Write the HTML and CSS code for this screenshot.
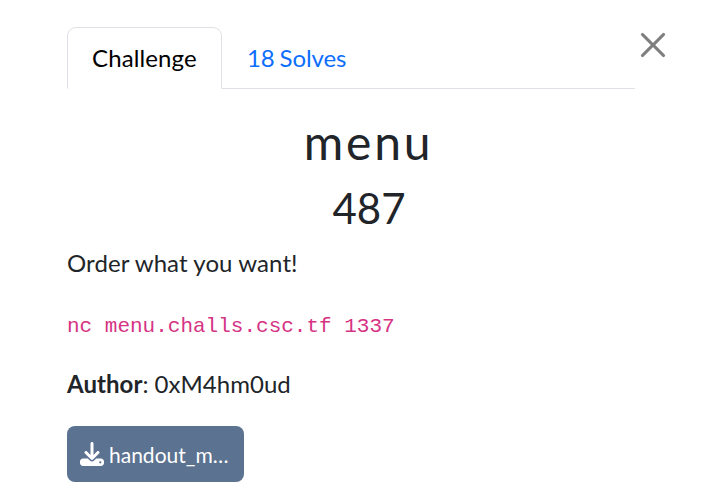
FILE: index.html
```html
<!DOCTYPE html>
<html lang="en">
<head>
<meta charset="utf-8">
<title>menu</title>
<link rel="stylesheet" href="styles.css">
</head>
<body>
<main class="modal">
  <header class="head">
    <nav class="tabs">
      <a class="tab active">Challenge</a>
      <a class="tab solves">18 Solves</a>
    </nav>
    <button class="close" aria-label="Close"><svg viewBox="0 0 16 16"><path d="M.293.293a1 1 0 0 1 1.414 0L8 6.586 14.293.293a1 1 0 1 1 1.414 1.414L9.414 8l6.293 6.293a1 1 0 0 1-1.414 1.414L8 9.414l-6.293 6.293a1 1 0 0 1-1.414-1.414L6.586 8 .293 1.707a1 1 0 0 1 0-1.414z"/></svg></button>
  </header>
  <section class="body">
    <h2 class="name">menu</h2>
    <h3 class="value">487</h3>
    <p class="desc">Order what you want!</p>
    <p class="cmd"><code>nc menu.challs.csc.tf 1337</code></p>
    <p class="author"><strong>Author</strong>: 0xM4hm0ud</p>
    <a class="file"><svg viewBox="0 0 512 512"><path d="M288 32c0-17.700-14.300-32-32-32s-32 14.300-32 32v242.700l-73.400-73.400c-12.500-12.500-32.800-12.500-45.300 0s-12.500 32.800 0 45.300l128 128c12.500 12.500 32.800 12.500 45.300 0l128-128c12.500-12.500 12.500-32.800 0-45.300s-32.800-12.500-45.300 0L288 274.700V32zM64 352c-35.300 0-64 28.700-64 64v32c0 35.300 28.700 64 64 64h384c35.300 0 64-28.700 64-64v-32c0-35.300-28.700-64-64-64H346.500l-45.300 45.300c-25 25-65.500 25-90.500 0L165.500 352H64zm368 56a24 24 0 1 1 0 48 24 24 0 1 1 0-48z"/></svg><span>handout_m…</span></a>
  </section>
</main>
</body>
</html>
```
FILE: styles.css
```css
* { box-sizing: border-box; }
body { margin: 0; background: #fff; color: #212529; font: 24px/36px Lato, sans-serif; }
h2, h3, p { margin: 0; font-weight: 400; }
.modal { padding: 27px 0 0 67px; }
.head { display: flex; align-items: flex-start; }
.tabs { display: flex; width: 568px; height: 62px; border-bottom: 1px solid #dee2e6; }
.tab { height: 62px; padding: 12px 24px; border: 1px solid transparent; border-radius: 9px 9px 0 0; color: #0d6efd; }
.tab.active { width: 155px; color: #000; background: #fff; border-color: #dee2e6 #dee2e6 #fff; letter-spacing: .12px; }
.tab.solves { word-spacing: -1.2px; letter-spacing: -.08px; }
.close { margin: 6px 0 0 6px; padding: 0; border: 0; background: none; width: 24px; height: 24px; opacity: .5; }
.close svg { display: block; width: 24px; height: 24px; stroke: #000; stroke-width: .15; overflow: visible; }
.body { width: 603px; }
.name { padding-top: 24px; font-size: 48px; line-height: 58px; letter-spacing: 2.8px; text-align: center; }
.value { padding: 12px 0 0 1px; font-size: 42px; line-height: 50px; text-align: center; }
.desc { padding-top: 12px; letter-spacing: .08px; }
.cmd { padding-top: 24px; }
.cmd code { font: 21px "Liberation Mono", monospace; color: #d63384; }
.author { padding-top: 25px; letter-spacing: .04px; }
.file { display: flex; align-items: center; gap: 5px; width: 177px; height: 56px; margin-top: 24px; padding: 0 13px; border-radius: 8px; background: #5b7290; color: #fff; font-size: 21px; }
.file svg { width: 24px; height: 24px; fill: #fff; }
.file span { padding-top: 2px; }
```
